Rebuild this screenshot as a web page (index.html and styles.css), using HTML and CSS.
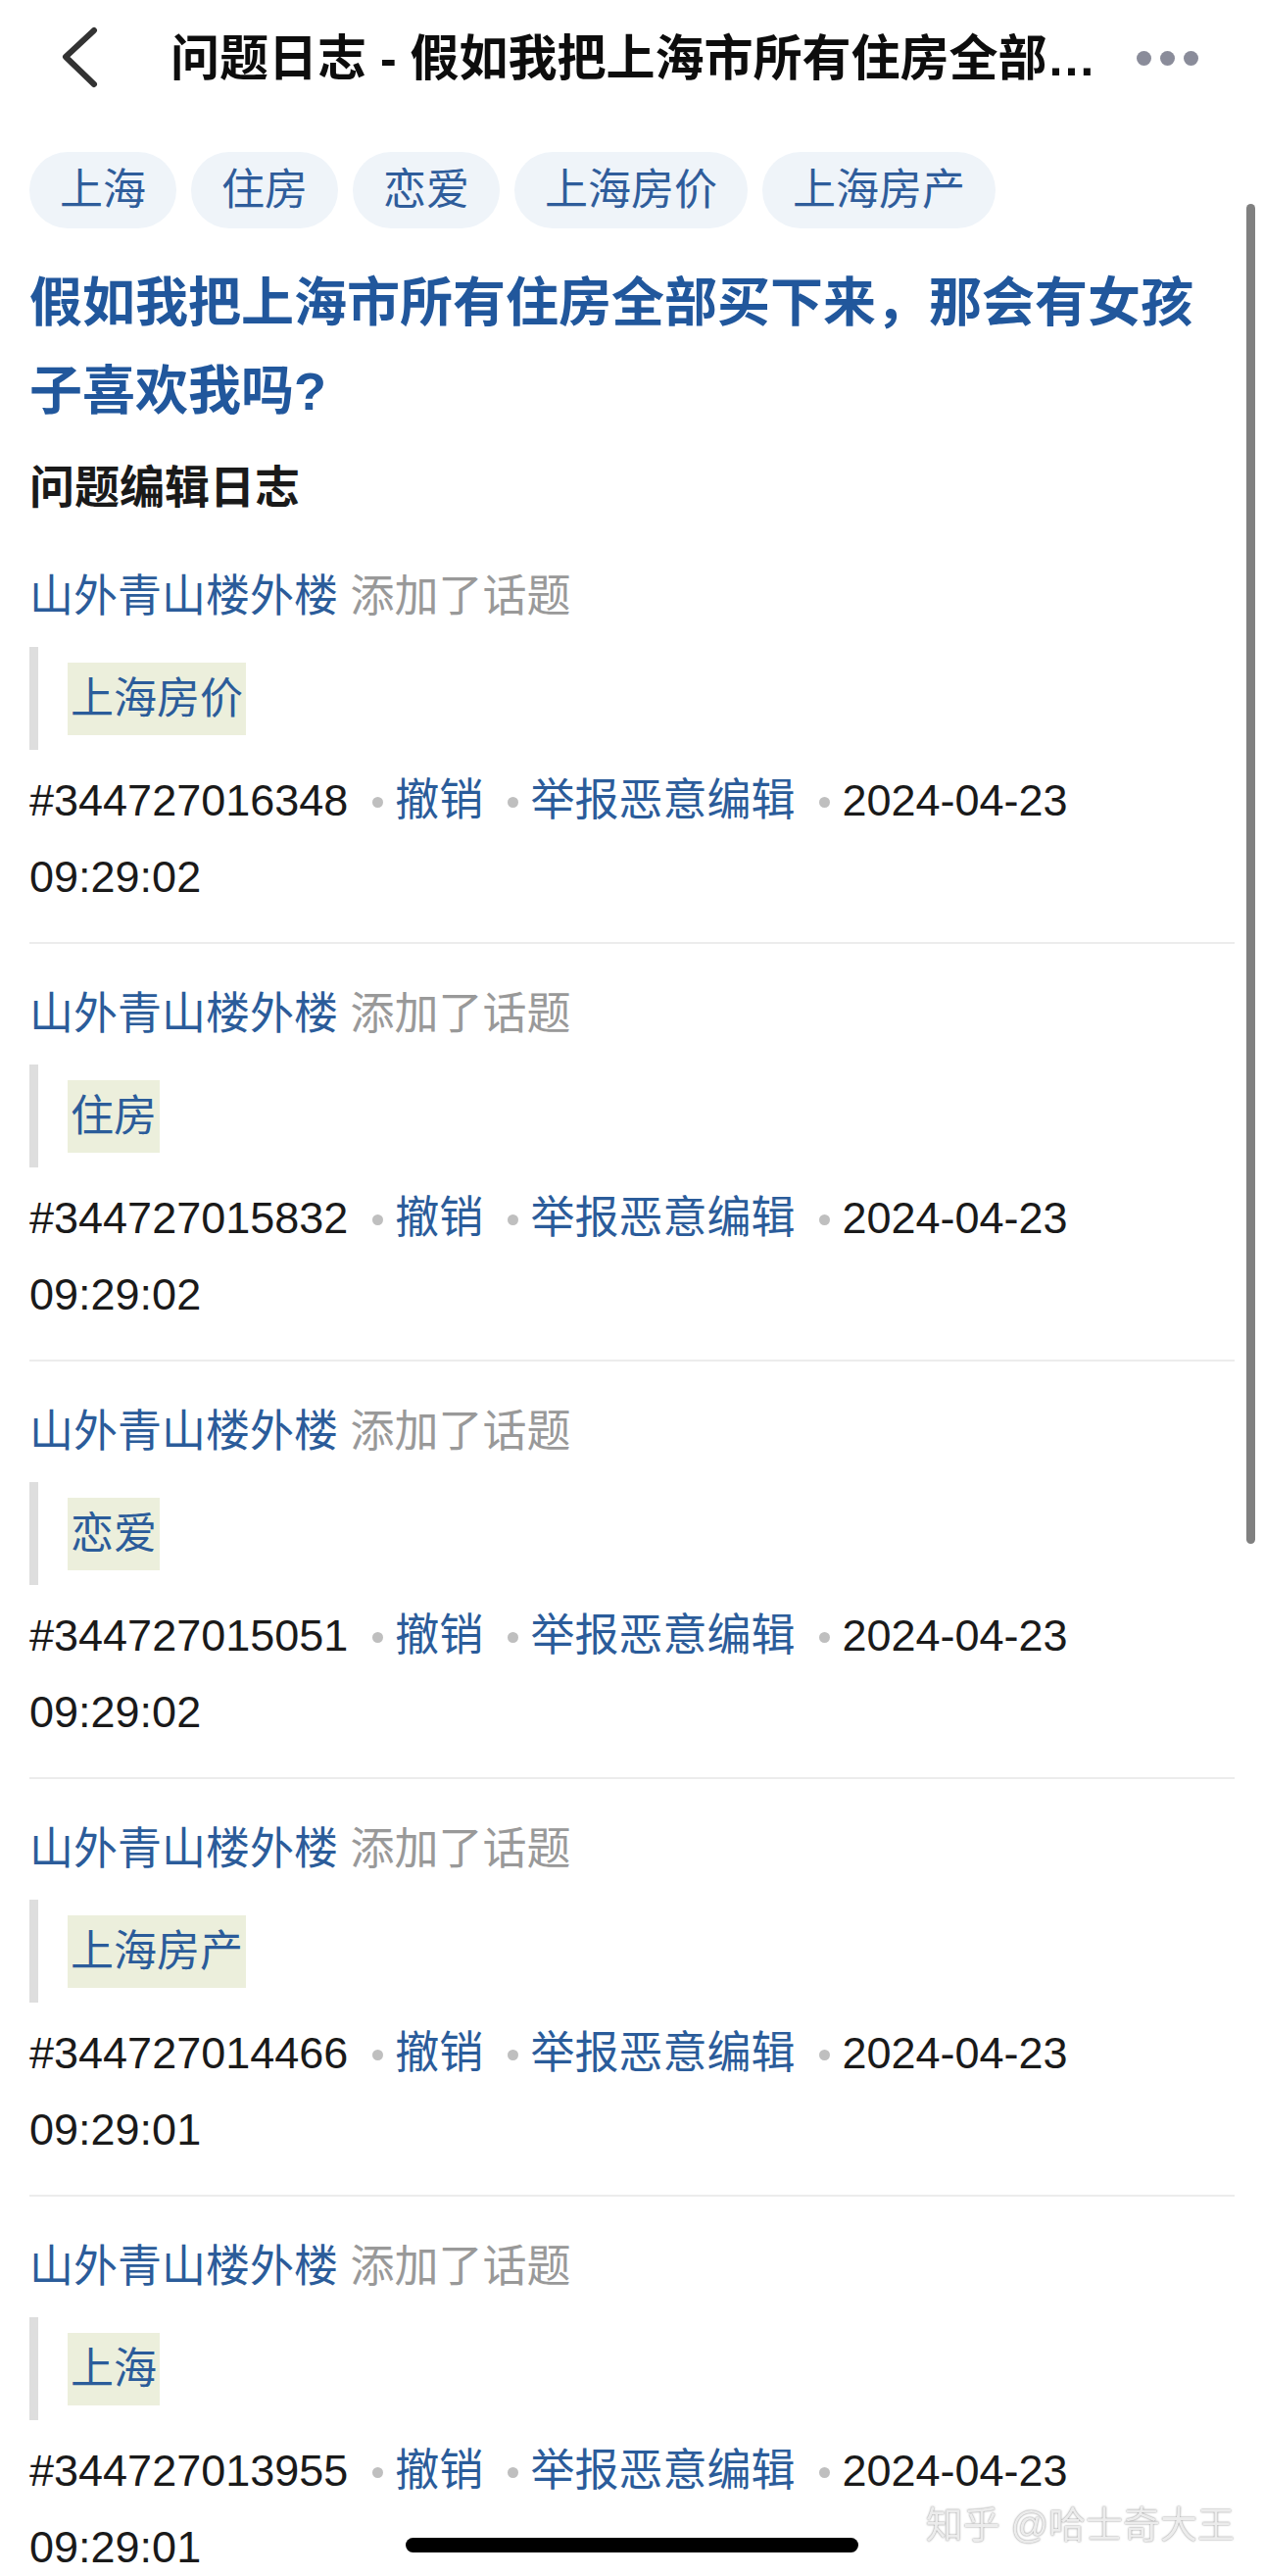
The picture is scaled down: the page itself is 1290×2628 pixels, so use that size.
FILE: index.html
```html
<!DOCTYPE html>
<html lang="zh-CN">
<head>
<meta charset="utf-8">
<title>问题日志</title>
<link rel="stylesheet" href="styles.css">
</head>
<body>
<div class="page">
  <header class="nav">
    <svg class="back" width="40" height="64" viewBox="0 0 40 64" aria-hidden="true">
      <path d="M34 4 L5 31 L34 59" fill="none" stroke="#333" stroke-width="6" stroke-linecap="round" stroke-linejoin="round"/>
    </svg>
    <div class="nav-title">问题日志 - 假如我把上海市所有住房全部买下来，那会有女孩子喜欢我吗？</div>
    <div class="more"><span></span><span></span><span></span></div>
  </header>

  <div class="chips">
    <span class="chip">上海</span>
    <span class="chip">住房</span>
    <span class="chip">恋爱</span>
    <span class="chip">上海房价</span>
    <span class="chip">上海房产</span>
  </div>

  <h1 class="question">假如我把上海市所有住房全部买下来，那会有女孩子喜欢我吗?</h1>
  <h2 class="section">问题编辑日志</h2>

  <div class="entry">
    <div class="who"><span class="author">山外青山楼外楼</span> <span class="action">添加了话题</span></div>
    <div class="quote"><span class="mark">上海房价</span></div>
    <div class="meta"><span class="id">#344727016348</span><i class="sep"></i><span class="link">撤销</span><i class="sep"></i><span class="link">举报恶意编辑</span><i class="sep"></i><span class="date">2024-04-23</span> <span class="time">09:29:02</span></div>
  </div>

  <div class="entry">
    <div class="who"><span class="author">山外青山楼外楼</span> <span class="action">添加了话题</span></div>
    <div class="quote"><span class="mark">住房</span></div>
    <div class="meta"><span class="id">#344727015832</span><i class="sep"></i><span class="link">撤销</span><i class="sep"></i><span class="link">举报恶意编辑</span><i class="sep"></i><span class="date">2024-04-23</span> <span class="time">09:29:02</span></div>
  </div>

  <div class="entry">
    <div class="who"><span class="author">山外青山楼外楼</span> <span class="action">添加了话题</span></div>
    <div class="quote"><span class="mark">恋爱</span></div>
    <div class="meta"><span class="id">#344727015051</span><i class="sep"></i><span class="link">撤销</span><i class="sep"></i><span class="link">举报恶意编辑</span><i class="sep"></i><span class="date">2024-04-23</span> <span class="time">09:29:02</span></div>
  </div>

  <div class="entry">
    <div class="who"><span class="author">山外青山楼外楼</span> <span class="action">添加了话题</span></div>
    <div class="quote"><span class="mark">上海房产</span></div>
    <div class="meta"><span class="id">#344727014466</span><i class="sep"></i><span class="link">撤销</span><i class="sep"></i><span class="link">举报恶意编辑</span><i class="sep"></i><span class="date">2024-04-23</span> <span class="time">09:29:01</span></div>
  </div>

  <div class="entry">
    <div class="who"><span class="author">山外青山楼外楼</span> <span class="action">添加了话题</span></div>
    <div class="quote"><span class="mark">上海</span></div>
    <div class="meta"><span class="id">#344727013955</span><i class="sep"></i><span class="link">撤销</span><i class="sep"></i><span class="link">举报恶意编辑</span><i class="sep"></i><span class="date">2024-04-23</span> <span class="time">09:29:01</span></div>
  </div>
</div>

<div class="scrollbar"></div>
<div class="watermark">知乎 @哈士奇大王</div>
<div class="home-indicator"></div>
</body>
</html>
```

FILE: styles.css
```css
html, body {
  margin: 0;
  padding: 0;
  height: 2628px;
  overflow: hidden;
  background: #fff;
}

body {
  font-family: "Liberation Sans", "Noto Sans CJK SC", sans-serif;
  color: #1a1a1a;
}

.page {
  padding: 0 30px;
}

/* Navigation bar */
.nav {
  height: 120px;
  display: flex;
  align-items: center;
  margin: 0 -30px;
  padding-left: 62px;
}

.back {
  flex: 0 0 40px;
  margin-top: -2px;
}

.nav-title {
  flex: 0 0 962px;
  margin-left: 72px;
  font-size: 50px;
  font-weight: 700;
  color: #0d0d0d;
  white-space: nowrap;
  overflow: hidden;
  text-overflow: ellipsis;
  line-height: 70px;
}

.more {
  display: flex;
  gap: 9px;
  margin-left: 24px;
  margin-top: -2px;
}

.more span {
  width: 15px;
  height: 15px;
  border-radius: 50%;
  background: #8a8c9a;
}

/* Topic chips */
.chips {
  display: flex;
  gap: 15px;
  margin-top: 35px;
}

.chip {
  height: 78px;
  line-height: 78px;
  padding: 0 31px;
  border-radius: 39px;
  background: #eff4f9;
  color: #2f5d9b;
  font-size: 44px;
}

/* Question title */
.question {
  margin: 31px 0 0;
  font-size: 54px;
  line-height: 90px;
  font-weight: 700;
  color: #21579c;
}

.section {
  margin: 13px 0 0;
  font-size: 46px;
  line-height: 80px;
  font-weight: 700;
  color: #1a1a1a;
}

/* Log entries */
.entry {
  padding: 33px 0 27px;
  border-bottom: 2px solid #ececec;
}

.who {
  font-size: 45px;
  line-height: 78px;
}

.author {
  color: #2b5c9a;
}

.action {
  color: #999;
}

.quote {
  margin-top: 12px;
  padding: 16px 0 15px 30px;
  border-left: 9px solid #dedede;
  font-size: 44px;
  line-height: 74px;
  height: 74px;
}

.mark {
  display: inline-block;
  vertical-align: top;
  padding: 0 3px;
  background: #ecefdc;
  color: #2b5c9a;
  line-height: 74px;
}

.meta {
  margin-top: 13px;
  font-size: 45px;
  line-height: 78px;
  color: #1a1a1a;
  max-width: 1180px;
}

.meta span {
  white-space: nowrap;
}

.link {
  color: #2b5c9a;
}

.sep {
  display: inline-block;
  width: 11px;
  height: 11px;
  border-radius: 50%;
  background: #bfbfbf;
  vertical-align: middle;
  margin: -4px 12px 0 25px;
}

/* Overlays */
.scrollbar {
  position: fixed;
  top: 208px;
  right: 9px;
  width: 9px;
  height: 1367px;
  border-radius: 5px;
  background: #808080;
}

.watermark {
  position: fixed;
  right: 30px;
  bottom: 33px;
  font-size: 38px;
  line-height: 38px;
  color: #ececec;
  text-shadow: 0 0 2px #7a7a7a;
  white-space: nowrap;
}

.home-indicator {
  position: fixed;
  left: 414px;
  bottom: 24px;
  width: 462px;
  height: 15px;
  border-radius: 8px;
  background: #000;
}
```
